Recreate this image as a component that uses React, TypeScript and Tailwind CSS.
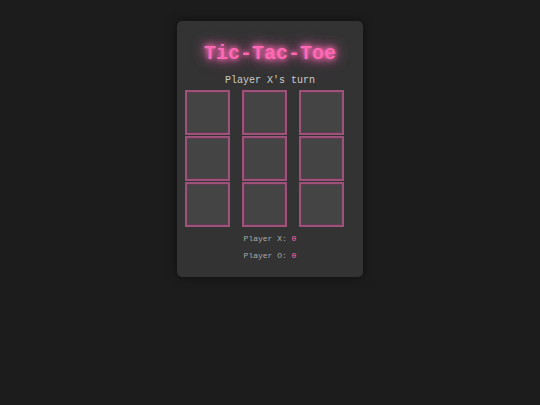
import { useState } from "react";

type Cell = "X" | "O" | null;

export default function App() {
  const [board, setBoard] = useState<Cell[]>(Array(9).fill(null));
  const [player, setPlayer] = useState<"X" | "O">("X");
  const [scores] = useState({ X: 0, O: 0 });

  const play = (i: number) => {
    if (board[i]) return;
    const next = board.slice();
    next[i] = player;
    setBoard(next);
    setPlayer(player === "X" ? "O" : "X");
  };

  return (
    <div className="min-h-screen bg-[#1c1c1c] font-['Liberation_Mono','Courier_New',monospace] pt-[21px]">
      <div className="mx-auto w-[186px] h-[256px] rounded-[5px] bg-[#333333] shadow-[0_0_10px_rgba(0,0,0,0.5)] pt-[21px] px-2">
        <h1 className="text-center text-[20px] leading-[24px] font-bold text-[#ff69b4] [text-shadow:0_0_5px_#ff69b4,0_0_10px_#ff69b4,0_0_15px_#ff69b4]">
          Tic-Tac-Toe
        </h1>
        <p className="mt-[9px] text-center text-[10px] leading-[12px] text-[#cccccc]">
          Player {player}'s turn
        </p>
        <div className="mt-[3px] grid grid-cols-[45px_45px_45px] gap-x-[12px] gap-y-[1px]">
          {board.map((c, i) => (
            <button
              key={i}
              onClick={() => play(i)}
              className="h-[45px] w-[45px] bg-[#444444] border-2 border-[#9c5279] shadow-[inset_0_0_0_1px_#5e3a4e] text-[#ff69b4] text-[24px] font-bold"
            >
              {c}
            </button>
          ))}
        </div>
        <div className="mt-[7px] text-center text-[8px] leading-[10px] text-[#aaaaaa]">
          <p>
            Player X: <span className="text-[#ff69b4]">{scores.X}</span>
          </p>
          <p className="mt-[7px]">
            Player O: <span className="text-[#ff69b4]">{scores.O}</span>
          </p>
        </div>
      </div>
    </div>
  );
}
